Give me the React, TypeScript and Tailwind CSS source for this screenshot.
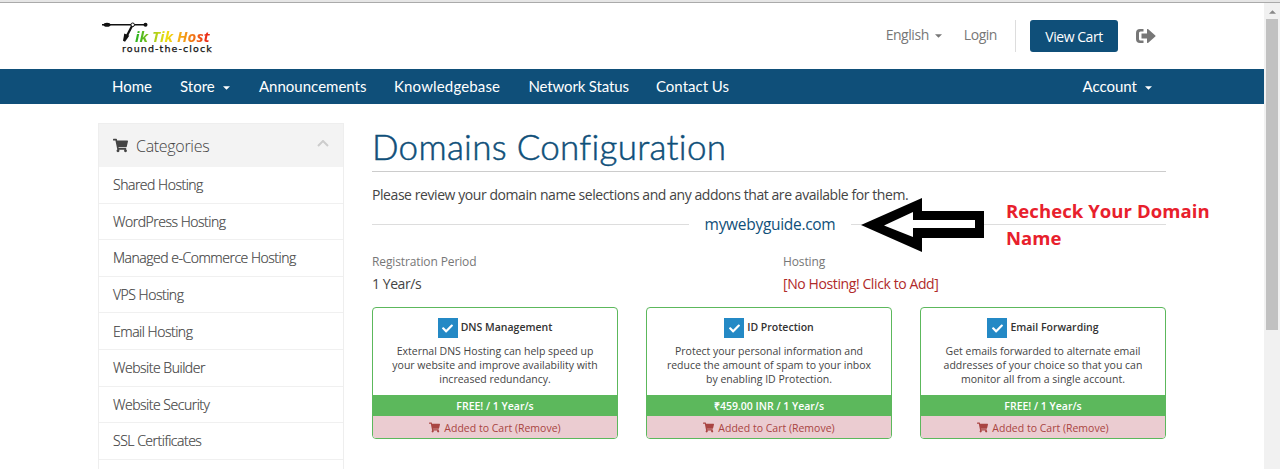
import { FaCheck, FaShoppingCart } from 'react-icons/fa'

const categories = [
  'Shared Hosting',
  'WordPress Hosting',
  'Managed e-Commerce Hosting',
  'VPS Hosting',
  'Email Hosting',
  'Website Builder',
  'Website Security',
  'SSL Certificates',
]

const addons = [
  {
    name: 'DNS Management',
    lines: ['External DNS Hosting can help speed up', 'your website and improve availability with', 'increased redundancy.'],
    price: 'FREE! / 1 Year/s',
  },
  {
    name: 'ID Protection',
    lines: ['Protect your personal information and', 'reduce the amount of spam to your inbox', 'by enabling ID Protection.'],
    price: '₹459.00 INR / 1 Year/s',
  },
  {
    name: 'Email Forwarding',
    lines: ['Get emails forwarded to alternate email', 'addresses of your choice so that you can', 'monitor all from a single account.'],
    price: 'FREE! / 1 Year/s',
  },
]

function Caret({ className }: { className?: string }) {
  return (
    <svg viewBox="0 0 8 4" className={`h-1 w-[7px] shrink-0 fill-current ${className ?? ''}`}>
      <path d="M0 0h8L4 4z" />
    </svg>
  )
}

function Logo() {
  return (
    <div className="relative mt-[17px] ml-1 h-[36px] w-[112px]">
      {/* Clock hands forming the T */}
      <svg viewBox="0 0 112 36" className="absolute inset-0 h-full w-full">
        <path d="M0 4.800h45" stroke="#111" strokeWidth="1.500" />
        <ellipse cx="5" cy="4.800" rx="3.500" ry="2" fill="#111" />
        <circle cx="43.500" cy="4.800" r="2" fill="#111" />
        <path d="M30.500 5L24 17.500" stroke="#111" strokeWidth="2.200" />
        <path d="M22.300 13.500l5 2.200-4.300 6-2-1z" fill="#111" />
        <circle cx="30.700" cy="4.800" r="1.800" fill="#fff" stroke="#111" strokeWidth="1" />
      </svg>
      <div className="absolute top-[8px] left-[33px] bg-linear-to-r from-[#32b41e] from-5% via-[#eedf10] via-40% to-[#ea2b16] to-90% bg-clip-text pr-1 font-['Open_Sans',sans-serif] text-[15px] leading-[16px] font-bold tracking-[0.050px] whitespace-nowrap text-transparent italic">
        ik Tik Host
      </div>
      <div className="absolute top-[24px] left-[20px] font-['DejaVu_Sans',sans-serif] text-[9.500px] leading-[9px] tracking-[1.100px] whitespace-nowrap text-[#111] [-webkit-text-stroke:0.25px_#111]">
        round-the-clock
      </div>
    </div>
  )
}

function Header() {
  return (
    <header className="flex h-[66px] justify-between pr-[108px] pl-[98px]">
      <Logo />
      <div className="mt-[17px] flex h-8 items-center text-[14px] tracking-[-0.450px] text-[#777]">
        <span className="-mt-[3px]">English</span>
        <Caret className="ml-[6px]" />
        <span className="-mt-[3px] ml-[22px]">Login</span>
        <span className="ml-[18px] h-8 w-px bg-[#ddd]" />
        <span className="ml-[14px] flex h-8 w-[88px] items-center justify-center rounded-[3px] bg-[#0f4f79] font-medium text-white">
          View Cart
        </span>
        <svg viewBox="0 0 20 16" className="ml-[18px] h-4 w-5 fill-[#777]">
          <path d="M7.500 1v2.500H4.500A1.500 1.500 0 0 0 3 5v6a1.500 1.500 0 0 0 1.500 1.500h3V15H4a4 4 0 0 1-4-4V5a4 4 0 0 1 4-4z" />
          <path d="M5.500 5.500H11V1.500a.6.6 0 0 1 1-.4l7.300 6.300a.8.8 0 0 1 0 1.200L12 14.900a.6.6 0 0 1-1-.4V10.500H5.500z" />
        </svg>
      </div>
    </header>
  )
}

function Nav() {
  return (
    <nav className="flex h-[35px] items-center bg-[#0f4f79] pr-[112px] pl-[112px] font-['Lato',sans-serif] text-[15px] text-white">
      <span className="w-[68px]">Home</span>
      <span className="flex w-[79px] items-center">
        Store
        <Caret className="mt-[2px] ml-2" />
      </span>
      <span className="w-[135px]">Announcements</span>
      <span className="w-[134.500px] tracking-[0.150px]">Knowledgebase</span>
      <span className="w-[127.500px] tracking-[-0.150px]">Network Status</span>
      <span>Contact Us</span>
      <span className="ml-auto flex items-center">
        Account
        <Caret className="mt-[2px] ml-2" />
      </span>
    </nav>
  )
}

function Sidebar() {
  return (
    <aside className="h-[346px] w-[246px] shrink-0 overflow-hidden border border-b-0 border-[#eee] text-[#444]">
      <div className="flex h-[43px] items-center bg-[#f3f3f3] pr-[14px] pl-[14px]">
        <FaShoppingCart className="size-[15px]" />
        <h3 className="ml-2 text-[16px] font-light tracking-[-0.300px]">Categories</h3>
        <svg viewBox="0 0 12 7" className="mb-1 ml-auto h-[7px] w-3" fill="none" stroke="#ccc" strokeWidth="2">
          <path d="M1 6l5-5 5 5" />
        </svg>
      </div>
      {categories.map((name) => (
        <div key={name} className="flex h-[36.600px] items-center border-b border-[#f0f0f0] pl-[14px] text-[14px] font-light tracking-[-0.480px] [-webkit-text-stroke:0.2px_#444]">
          {name}
        </div>
      ))}
    </aside>
  )
}

function AddonCard({ name, lines, price }: (typeof addons)[number]) {
  return (
    <div className="h-[132px] overflow-hidden rounded-[4px] border border-[#5cb85c] text-center text-[10.500px]">
      <div className="flex h-[87px] flex-col pt-[10px]">
        <div className="flex items-center justify-center gap-[3px] font-semibold text-[#333]">
          <span className="flex size-[20px] items-center justify-center bg-[#2489c5] text-white">
            <FaCheck className="size-[11px]" />
          </span>
          {name}
        </div>
        <p className="mt-[6px] leading-[14px] text-[#444]">
          {lines.map((line) => (
            <span key={line} className="block">{line}</span>
          ))}
        </p>
      </div>
      <div className="h-[21px] bg-[#5cb85c] leading-[22px] font-semibold text-white">{price}</div>
      <div className="flex h-[22px] items-center justify-center gap-1 bg-[#ebccd1] pt-px leading-[22px] text-[#a94442]">
        <FaShoppingCart className="-mt-px size-[11px]" />
        Added to Cart (Remove)
      </div>
    </div>
  )
}

function Annotation() {
  return (
    <>
      <svg viewBox="0 0 124 56" className="absolute top-[75px] left-[488px] h-[56px] w-[124px]">
        <path d="M1 27L62 0v13h62v27H62v14z" fill="#000" />
        <path d="M24 27.500L53 14v8h62v8H53v9z" fill="#fff" />
      </svg>
      <div className="absolute top-[74px] left-[634px] w-[230px] text-[18.500px] leading-[27px] font-bold tracking-[0.080px] text-[#e8202c]">
        Recheck Your Domain
        <br />
        Name
      </div>
    </>
  )
}

function Main() {
  return (
    <main className="relative w-[794px]">
      <h1 className="h-[49px] border-b border-[#ccc] font-['Lato',sans-serif] text-[35px] leading-[47px] font-light tracking-[0.280px] text-[#0f4f79] [-webkit-text-stroke:0.5px_#0f4f79]">
        Domains Configuration
      </h1>
      <p className="mt-[13px] text-[14px] leading-5 tracking-[-0.430px] text-[#444]">
        Please review your domain name selections and any addons that are available for them.
      </p>
      <div className="mt-[7px] flex h-[24px] items-center">
        <span className="h-px w-[317px] bg-[#ddd]" />
        <span className="flex-1 text-center text-[15.500px] leading-6 tracking-[-0.300px] text-[#0f4f79]">mywebyguide.com</span>
        <span className="h-px w-[315px] bg-[#ddd]" />
      </div>
      <div className="mt-[16px] grid grid-cols-[411px_1fr]">
        <div>
          <div className="text-[12px] leading-5 tracking-[-0.120px] text-[#777]">Registration Period</div>
          <div className="mt-[2px] text-[14px] leading-5 tracking-[-0.430px] text-[#444]">1 Year/s</div>
        </div>
        <div>
          <div className="text-[12px] leading-5 tracking-[-0.120px] text-[#777]">Hosting</div>
          <div className="mt-[2px] text-[14px] leading-5 tracking-[-0.400px] text-[#b02a2a]">[No Hosting! Click to Add]</div>
        </div>
      </div>
      <div className="mt-[13px] grid grid-cols-3 gap-[28px]">
        {addons.map((addon) => (
          <AddonCard key={addon.name} {...addon} />
        ))}
      </div>
      <Annotation />
    </main>
  )
}

function Scrollbar() {
  return (
    <div className="flex h-[466px] w-4 flex-col items-center bg-[#f1f1f1]">
      <svg viewBox="0 0 8 4" className="mt-[7px] h-1 w-[7px] fill-[#888]">
        <path d="M0 4h8L4 0z" />
      </svg>
      <div className="mt-[5px] h-[311px] w-3 bg-[#c1c1c1]" />
    </div>
  )
}

export default function App() {
  return (
    <div className="h-[469px] w-[1280px] overflow-hidden bg-white font-['Open_Sans',sans-serif]">
      <div className="h-[3px] border-b border-[#aaa] bg-[#e6e6e6]" />
      <div className="flex">
        <div className="w-[1264px]">
          <Header />
          <Nav />
          <div className="mt-[19px] flex gap-[28px] pl-[98px]">
            <Sidebar />
            <Main />
          </div>
        </div>
        <Scrollbar />
      </div>
    </div>
  )
}
